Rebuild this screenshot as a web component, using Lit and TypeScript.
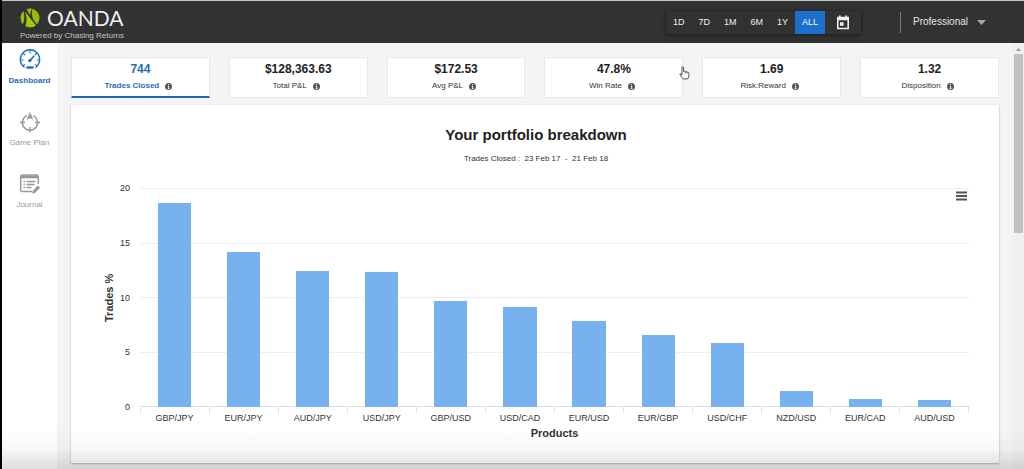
import { LitElement, html, css, svg } from "lit";
import { customElement, state } from "lit/decorators.js";
import { classMap } from "lit/directives/class-map.js";

interface Stat {
  value: string;
  label: string;
}

const RANGES = ["1D", "7D", "1M", "6M", "1Y", "ALL"];

const STATS: Stat[] = [
  { value: "744", label: "Trades Closed" },
  { value: "$128,363.63", label: "Total P&L" },
  { value: "$172.53", label: "Avg P&L" },
  { value: "47.8%", label: "Win Rate" },
  { value: "1.69", label: "Risk:Reward" },
  { value: "1.32", label: "Disposition" },
];

const PRODUCTS = [
  { name: "GBP/JPY", share: 18.6 },
  { name: "EUR/JPY", share: 14.2 },
  { name: "AUD/JPY", share: 12.45 },
  { name: "USD/JPY", share: 12.35 },
  { name: "GBP/USD", share: 9.65 },
  { name: "USD/CAD", share: 9.1 },
  { name: "EUR/USD", share: 7.9 },
  { name: "EUR/GBP", share: 6.55 },
  { name: "USD/CHF", share: 5.85 },
  { name: "NZD/USD", share: 1.45 },
  { name: "EUR/CAD", share: 0.75 },
  { name: "AUD/USD", share: 0.65 },
];

const SCALE_MAX = 20;

const gauge = svg`
  <g fill="none" stroke="currentColor" stroke-linecap="round">
    <path d="M5.2 18.2A9.7 9.7 0 1 1 16.8 18.2" stroke-width="1.3"/>
    <path d="M11 1.5V4M4.5 4.5l1.4 1.4M1.5 11H4M4.2 16.6l1.3-1M20.500 11H18M17.800 16.600l-1.300-1M17.500 4.500l-1.200 1.200" stroke-width="1.100"/>
    <path d="M11.200 11.200L15 7" stroke-width="1.600"/>
  </g>
  <circle cx="10.800" cy="11.600" r="1.700" fill="currentColor"/>
  <path d="M7.500 17.300h7v2.400h-7z" fill="currentColor"/>`;

const compass = svg`
  <g fill="none" stroke="currentColor" stroke-width="1.400">
    <path d="M7.800 4.700A7.600 7.600 0 1 0 14.200 4.700"/>
    <path d="M1 11.500h5M16 11.500h5M11 16v5.500"/>
  </g>
  <path d="M11 1L14.400 8.800L11 7.200L7.600 8.800z" fill="currentColor"/>`;

const journal = svg`
  <path d="M13 18.500H3.500A1.800 1.800 0 0 1 1.700 16.700V3.800A1.800 1.800 0 0 1 3.500 2H17.500A1.800 1.800 0 0 1 19.300 3.800V11" fill="none" stroke="currentColor" stroke-width="1.500"/>
  <path d="M1.700 2.500h17.600v2.800H1.700z" fill="currentColor"/>
  <path d="M4.500 8.500h1.600M7.500 8.500h9M4.500 11.500h1.600M7.500 11.500h8M4.500 14.500h1.600M7.500 14.500h5" stroke="currentColor" stroke-width="1.300"/>
  <path d="M13.200 20.500l.5-2.800 5-5.200 2.400 2.300-5.100 5.200z" fill="currentColor"/>`;

const NAV = [
  { label: "Dashboard", icon: gauge },
  { label: "Game Plan", icon: compass },
  { label: "Journal", icon: journal },
];

@customElement("top-bar")
export class TopBar extends LitElement {
  static styles = css`
    :host {
      display: flex;
      align-items: center;
      height: 42px;
      background: #323232;
      border-top: 1px solid #c2c6c4;
      color: #eee;
    }
    .brand {
      display: flex;
      flex-direction: column;
      gap: 1px;
      padding: 4px 0 0 18px;
      margin-right: auto;
    }
    .logo {
      display: flex;
      align-items: center;
      gap: 7px;
      height: 22px;
      font: 400 21px/22px Lato, sans-serif;
      color: #eee;
    }
    .tagline {
      font-size: 8px;
      line-height: 12px;
      color: #c4c4c4;
    }
    .picker {
      display: flex;
      height: 23px;
      box-shadow: 0 1px 4px rgba(0, 0, 0, 0.5);
    }
    button {
      display: flex;
      align-items: center;
      border: 0;
      padding: 0 7px;
      background: none;
      color: #eee;
      font: 500 9px/12px "Liberation Sans", Arial, sans-serif;
    }
    .active {
      background: #1a70ca;
      color: #fff;
    }
    .calendar {
      padding: 0 11px;
    }
    .account {
      display: flex;
      align-items: center;
      height: 21px;
      margin: 0 38px 0 39px;
      padding-left: 12px;
      border-left: 1px solid #777;
      gap: 8px;
    }
    select {
      appearance: none;
      border: 0;
      padding: 0;
      background: none;
      color: #e4e4e4;
      font: 10px/14px "Liberation Sans", Arial, sans-serif;
    }
    svg {
      display: block;
    }
  `;

  @state() private range = "ALL";

  render() {
    return html`
      <div class="brand">
        <div class="logo">
          <svg width="20" height="20" viewBox="0 0 20 20" aria-hidden="true">
            <path d="M6.500 1.200A9.500 9.500 0 0 1 19.500 10A9.500 9.500 0 0 1 17 16.500L13.200 11.500Q10.800 5.500 12.600.9L11.900.7Q9.800 4.500 10.400 8z" fill="#94bd0c" />
            <path d="M3.600 3Q.5 5.600.5 10Q.5 13.800 3 16.500Q5.200 10.500 3.600 3z" fill="#94bd0c" />
            <path d="M5 3.500L16 17.500Q11 20.800 5.200 18.300Q8 11.500 5 3.500z" fill="#a0c80c" />
          </svg>
          <span>OANDA</span>
        </div>
        <span class="tagline">Powered by Chasing Returns</span>
      </div>
      <div class="picker">
        ${RANGES.map(
          (r) => html`<button
            class=${classMap({ active: r === this.range })}
            @click=${() => (this.range = r)}
          >${r}</button>`
        )}
        <button class="calendar" aria-label="Choose dates">
          <svg width="14" height="15" viewBox="0 0 14 15">
            <path d="M1.800 2.500h10.400v11H1.800z" fill="none" stroke="#eee" stroke-width="1.600" />
            <path d="M1.500 2h11v3.200h-11zM3 .5h1.700V3H3zM9.300.5H11V3H9.300zM4 7.200h3.600v3.600H4z" fill="#eee" />
          </svg>
        </button>
      </div>
      <div class="account">
        <select aria-label="Account">
          <option>Professional</option>
        </select>
        <svg width="9" height="5" viewBox="0 0 9 5"><path d="M0 0h9L4.500 5z" fill="#a8a8a8" /></svg>
      </div>
    `;
  }
}

@customElement("side-nav")
export class SideNav extends LitElement {
  static styles = css`
    :host {
      display: block;
      flex: 0 0 55px;
      background: #fff;
    }
    nav {
      display: flex;
      flex-direction: column;
      gap: 24px;
      padding-top: 6px;
    }
    a {
      display: flex;
      flex-direction: column;
      align-items: center;
      gap: 4px;
      color: #999;
      font-size: 8px;
      line-height: 12px;
      text-decoration: none;
    }
    .current {
      color: #1f6dbd;
      font-weight: bold;
    }
  `;

  render() {
    return html`<nav>
      ${NAV.map(
        (item, i) => html`<a href="#" class=${classMap({ current: i === 0 })}>
          <svg width="22" height="22" viewBox="0 0 22 22" aria-hidden="true">${item.icon}</svg>
          <span>${item.label}</span>
        </a>`
      )}
    </nav>`;
  }
}

@customElement("stat-cards")
export class StatCards extends LitElement {
  static styles = css`
    :host {
      display: grid;
      grid-template-columns: repeat(6, 1fr);
      gap: 19px;
    }
    .card {
      position: relative;
      display: flex;
      flex-direction: column;
      align-items: center;
      gap: 4px;
      height: 41px;
      box-sizing: border-box;
      padding: 4px 0 0;
      border: 1px solid #e8e8ea;
      background: #fff;
      color: #333;
      font: 8px/12px "Liberation Sans", Arial, sans-serif;
    }
    .value {
      font-size: 12px;
      line-height: 14px;
      font-weight: bold;
      color: #222;
    }
    .selected,
    .selected .value {
      color: #1f6dbd;
      font-weight: bold;
    }
    .selected {
      border-bottom: 2px solid #1c67b6;
    }
    .label {
      display: flex;
      align-items: center;
      gap: 6px;
      padding-right: 4px;
    }
    .pointer {
      position: absolute;
      right: -8px;
      top: 8px;
    }
  `;

  @state() private selected = 0;

  render() {
    return STATS.map(
      (s, i) => html`<button
        class=${classMap({ card: true, selected: i === this.selected })}
        @click=${() => (this.selected = i)}
      >
        <span class="value">${s.value}</span>
        <span class="label">
          ${s.label}
          <svg width="7" height="7" viewBox="0 0 7 7" aria-hidden="true">
            <circle cx="3.500" cy="3.500" r="3.500" fill="#555" />
            <path d="M3.500 1v1.100M2.800 3h.9v2.500M2.700 5.500h1.800" fill="none" stroke="#fff" stroke-width=".9" />
          </svg>
        </span>
        ${s.label === "Win Rate"
          ? html`<svg class="pointer" width="11" height="14" viewBox="0 0 11 14" aria-hidden="true">
              <path
                d="M3 9V1.600Q3 .7 3.800.7T4.600 1.600V5.500Q5.600 4.800 6.300 5.700Q7.300 5.200 8 6.100Q9.800 5.800 9.900 7.300V10L8.800 12.900H4L1 8.800Q.6 7.600 1.600 7.600z"
                fill="#fff" stroke="#555" stroke-width="1" />
              <path d="M6.300 5.700V7.500M8 6.100V7.700" stroke="#555" stroke-width=".8" />
            </svg>`
          : ""}
      </button>`
    );
  }
}

@customElement("portfolio-chart")
export class PortfolioChart extends LitElement {
  static styles = css`
    :host {
      display: block;
      padding: 20px 30px 23px 32px;
      background: #fff;
      box-shadow: 0 1px 2px rgba(0, 0, 0, 0.3);
      color: #333;
    }
    h1 {
      margin: 0;
      font-size: 15px;
      line-height: 20px;
      text-align: center;
      color: #222;
    }
    .dates {
      margin: 8px 0 23px;
      font-size: 8px;
      line-height: 12px;
      text-align: center;
      white-space: pre;
    }
    .chart {
      display: grid;
      grid-template-columns: 12px 15px 1fr;
      font-size: 9px;
    }
    .y-title {
      writing-mode: vertical-rl;
      transform: rotate(180deg);
      text-align: center;
      font-size: 11px;
      line-height: 12px;
      font-weight: bold;
    }
    .y-labels {
      display: flex;
      flex-direction: column;
      justify-content: space-between;
      margin: -6px 0;
      line-height: 12px;
      text-align: right;
    }
    .plot {
      position: relative;
      display: grid;
      height: 219px;
      margin-left: 10px;
    }
    .lines,
    .bars {
      grid-area: 1 / 1;
    }
    .lines {
      display: flex;
      flex-direction: column;
      justify-content: space-between;
    }
    .line {
      height: 1px;
      background: #ededed;
    }
    .line:last-child {
      background: #d8dfef;
    }
    .bars {
      display: flex;
      align-items: flex-end;
      justify-content: space-around;
      z-index: 1;
    }
    .bar {
      width: 4%;
      background: #78b1f0;
      box-shadow: 0 0 0 1px #fff8;
    }
    .menu {
      position: absolute;
      right: 2px;
      top: 3px;
      z-index: 2;
      border: 0;
      padding: 0;
      background: none;
    }
    .menu svg {
      display: block;
    }
    .x-axis {
      grid-column: 3;
      margin-left: 10px;
    }
    .ticks,
    .x-labels {
      display: grid;
      grid-template-columns: repeat(12, 1fr);
    }
    .ticks {
      height: 6px;
      border-right: 1px solid #d8dfef;
    }
    .tick {
      border-left: 1px solid #d8dfef;
    }
    .x-labels {
      line-height: 10px;
      text-align: center;
    }
    .x-title {
      margin-top: 3px;
      font-size: 11px;
      line-height: 14px;
      font-weight: bold;
      text-align: center;
    }
  `;

  render() {
    return html`
      <h1>Your portfolio breakdown</h1>
      <div class="dates">Trades Closed :  23 Feb 17  -  21 Feb 18</div>
      <div class="chart">
        <div class="y-title">Trades %</div>
        <div class="y-labels">${[20, 15, 10, 5, 0].map((n) => html`<span>${n}</span>`)}</div>
        <div class="plot">
          <div class="lines">${[20, 15, 10, 5, 0].map(() => html`<div class="line"></div>`)}</div>
          <div class="bars">
            ${PRODUCTS.map(
              (p) => html`<div class="bar" style="height:${(p.share / SCALE_MAX) * 100}%"></div>`
            )}
          </div>
          <button class="menu" aria-label="Chart menu">
            <svg width="11" height="10" viewBox="0 0 11 10">
              <path d="M0 1.500h11M0 5h11M0 8.500h11" stroke="#555" stroke-width="1.800" />
            </svg>
          </button>
        </div>
        <div class="x-axis">
          <div class="ticks">${PRODUCTS.map(() => html`<div class="tick"></div>`)}</div>
          <div class="x-labels">${PRODUCTS.map((p) => html`<span>${p.name}</span>`)}</div>
          <div class="x-title">Products</div>
        </div>
      </div>
    `;
  }
}

@customElement("app-root")
export class AppRoot extends LitElement {
  static styles = css`
    :host {
      position: relative;
      display: flex;
      flex-direction: column;
      height: 100vh;
      box-sizing: border-box;
      overflow: hidden;
      border-left: 2px solid #000;
      background: #f4f3f6;
      font-family: "Liberation Sans", Arial, sans-serif;
    }
    .body {
      display: flex;
      flex: 1;
      min-height: 0;
    }
    main {
      display: flex;
      flex-direction: column;
      gap: 7px;
      flex: 1;
      min-width: 0;
      padding: 14px;
    }
    .scrollbar {
      display: flex;
      flex-direction: column;
      align-items: center;
      flex: 0 0 11px;
      background: #f0f0f1;
    }
    .arrow {
      margin: 5px 0 3px;
    }
    .thumb {
      width: 9px;
      height: 42%;
      background: #c1c1c1;
    }
    .fade {
      position: absolute;
      inset: auto 0 0 0;
      height: 40px;
      background: linear-gradient(transparent, rgba(0, 0, 0, 0.03) 50%, rgba(0, 0, 0, 0.13));
      pointer-events: none;
      z-index: 3;
    }
  `;

  render() {
    return html`
      <top-bar></top-bar>
      <div class="body">
        <side-nav></side-nav>
        <main>
          <stat-cards></stat-cards>
          <portfolio-chart></portfolio-chart>
        </main>
        <div class="scrollbar">
          <svg class="arrow" width="5" height="3" viewBox="0 0 5 3"><path d="M0 3h5L2.500 0z" fill="#999" /></svg>
          <div class="thumb"></div>
        </div>
      </div>
      <div class="fade"></div>
    `;
  }
}
